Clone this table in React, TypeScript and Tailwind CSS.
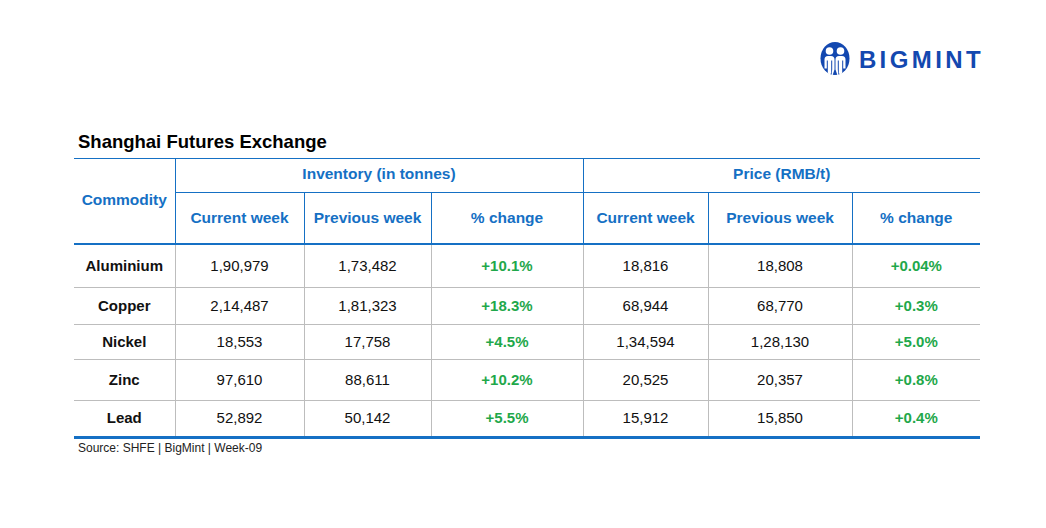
import React from "react";

interface Row {
  name: string;
  invCur: string;
  invPrev: string;
  invChg: string;
  priceCur: string;
  pricePrev: string;
  priceChg: string;
  h: string;
}

const rows: Row[] = [
  { name: "Aluminium", invCur: "1,90,979", invPrev: "1,73,482", invChg: "+10.1%", priceCur: "18,816", pricePrev: "18,808", priceChg: "+0.04%", h: "h-[44px]" },
  { name: "Copper", invCur: "2,14,487", invPrev: "1,81,323", invChg: "+18.3%", priceCur: "68,944", pricePrev: "68,770", priceChg: "+0.3%", h: "h-[37px]" },
  { name: "Nickel", invCur: "18,553", invPrev: "17,758", invChg: "+4.5%", priceCur: "1,34,594", pricePrev: "1,28,130", priceChg: "+5.0%", h: "h-[35px]" },
  { name: "Zinc", invCur: "97,610", invPrev: "88,611", invChg: "+10.2%", priceCur: "20,525", pricePrev: "20,357", priceChg: "+0.8%", h: "h-[41px]" },
  { name: "Lead", invCur: "52,892", invPrev: "50,142", invChg: "+5.5%", priceCur: "15,912", pricePrev: "15,850", priceChg: "+0.4%", h: "h-[37px]" },
];

const Logo = () => (
  <div className="flex items-center gap-[9px]">
    <svg width="30" height="38" viewBox="0 0 30 37">
      <ellipse cx="15" cy="17" rx="14.5" ry="16.5" fill="#1348b0" />
      <circle cx="9.5" cy="9.5" r="3.8" fill="#fff" />
      <circle cx="20.5" cy="9.5" r="3.8" fill="#fff" />
      <path d="M4.5 27 V18 Q4.5 14.5 8 14.5 H11 Q14.5 14.5 14.5 18 V28 L12.5 34 H11.5 L12.2 28 V19 H11.2 V31 L9.5 35 L7.8 31 V19 H6.8 V27 Z" fill="#fff" />
      <path d="M25.5 27 V18 Q25.5 14.5 22 14.5 H19 Q15.5 14.5 15.5 18 V28 L17.5 34 H18.5 L17.8 28 V19 H18.8 V31 L20.5 35 L22.2 31 V19 H23.2 V27 Z" fill="#fff" />
    </svg>
    <span className="text-[24px] font-bold leading-none tracking-[3.4px] text-[#1348b0] [font-family:'Liberation_Sans',Arial,sans-serif]">
      BIGMINT
    </span>
  </div>
);

export default function App() {
  const head = "text-[15.5px] font-bold text-[#1570c4] text-center";
  const cell = "text-[15px] text-[#111] text-center border-l border-[#bdbdbd]";
  const green = "text-[15px] font-bold text-[#1fa84b] text-center border-l border-[#bdbdbd]";

  return (
    <div className="w-full h-[528px] bg-white [font-family:'Liberation_Sans',Arial,sans-serif]">
      <div className="flex justify-end pt-[41px] pr-[62px]">
        <Logo />
      </div>

      <div className="pl-[74px] pt-[52px]">
        <h1 className="pl-[4px] text-[18.5px] leading-[22px] font-bold text-black">
          Shanghai Futures Exchange
        </h1>

        <table className="mt-[5px] w-[906px] border-collapse table-fixed">
          <colgroup>
            <col className="w-[101px]" />
            <col className="w-[129px]" />
            <col className="w-[127px]" />
            <col className="w-[152px]" />
            <col className="w-[125px]" />
            <col className="w-[144px]" />
            <col className="w-[128px]" />
          </colgroup>
          <thead>
            <tr className="h-[34px] border-t border-[#1570c4]">
              <th rowSpan={2} className={`${head} pb-[3px]`}>
                Commodity
              </th>
              <th colSpan={3} className={`${head} pb-[4px] border-l border-b border-[#1570c4]`}>
                Inventory (in tonnes)
              </th>
              <th colSpan={3} className={`${head} pb-[4px] border-l border-b border-[#1570c4]`}>
                Price (RMB/t)
              </th>
            </tr>
            <tr className="h-[51px] border-b-[2px] border-[#1570c4]">
              <th className={`${head} border-l border-[#1570c4]`}>Current week</th>
              <th className={`${head} border-l border-[#1570c4]`}>Previous week</th>
              <th className={`${head} border-l border-[#1570c4]`}>% change</th>
              <th className={`${head} border-l border-[#1570c4]`}>Current week</th>
              <th className={`${head} border-l border-[#1570c4]`}>Previous week</th>
              <th className={`${head} border-l border-[#1570c4]`}>% change</th>
            </tr>
          </thead>
          <tbody>
            {rows.map((r, i) => (
              <tr
                key={r.name}
                className={`${r.h} ${
                  i === rows.length - 1 ? "border-b-[3px] border-b-[#1570c4]" : "border-b border-b-[#bdbdbd]"
                }`}
              >
                <td className="text-[15px] font-bold text-[#111] text-center">{r.name}</td>
                <td className={cell}>{r.invCur}</td>
                <td className={cell}>{r.invPrev}</td>
                <td className={green}>{r.invChg}</td>
                <td className={cell}>{r.priceCur}</td>
                <td className={cell}>{r.pricePrev}</td>
                <td className={green}>{r.priceChg}</td>
              </tr>
            ))}
          </tbody>
        </table>

        <p className="pl-[4px] pt-[2px] text-[12px] leading-[15px] text-[#222]">
          Source: SHFE | BigMint | Week-09
        </p>
      </div>
    </div>
  );
}
